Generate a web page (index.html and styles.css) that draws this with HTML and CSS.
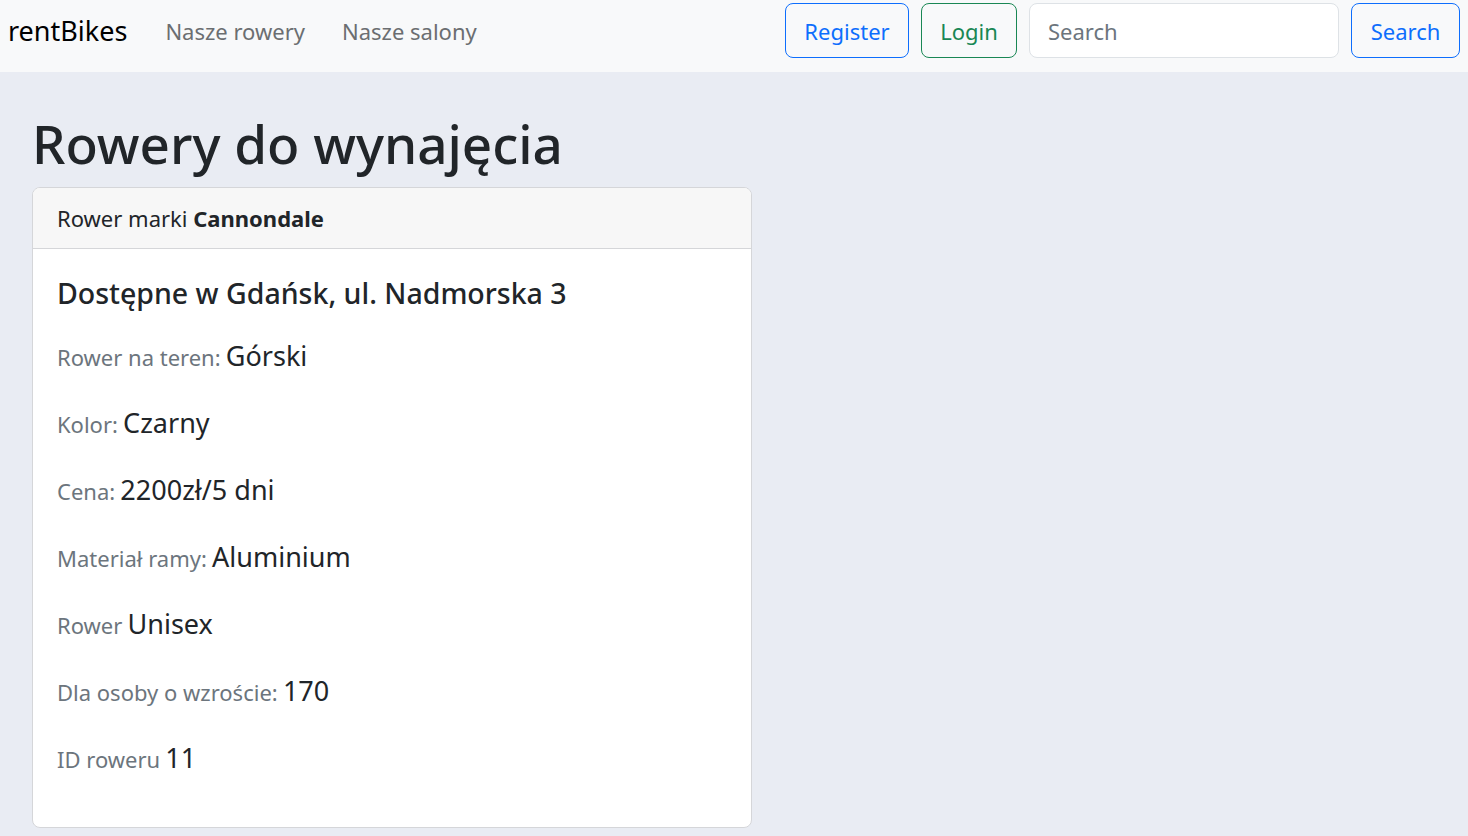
FILE: index.html
```html
<!DOCTYPE html>
<html lang="pl">
<head>
<meta charset="utf-8">
<title>rentBikes</title>
<link rel="stylesheet" href="styles.css">
</head>
<body>
<nav class="navbar">
  <div class="nav-left">
    <a class="brand" href="#">rentBikes</a>
    <a class="nav-link" href="#">Nasze rowery</a>
    <a class="nav-link" href="#">Nasze salony</a>
  </div>
  <div class="nav-right">
    <a class="btn btn-blue btn-register" href="#">Register</a>
    <a class="btn btn-green btn-login" href="#">Login</a>
    <form class="search-form">
      <input class="search-input" type="search" placeholder="Search">
      <button class="btn btn-blue btn-search" type="button">Search</button>
    </form>
  </div>
</nav>
<main class="container">
  <h1 class="page-title">Rowery do wynajęcia</h1>
  <div class="card">
    <div class="card-header">Rower marki <b>Cannondale</b></div>
    <div class="card-body">
      <h4 class="card-title">Dostępne w Gdańsk, ul. Nadmorska 3</h4>
      <p class="row"><span class="label">Rower na teren:</span> <span class="value">Górski</span></p>
      <p class="row"><span class="label">Kolor:</span> <span class="value">Czarny</span></p>
      <p class="row"><span class="label">Cena:</span> <span class="value">2200zł/5 dni</span></p>
      <p class="row"><span class="label">Materiał ramy:</span> <span class="value">Aluminium</span></p>
      <p class="row"><span class="label">Rower</span> <span class="value">Unisex</span></p>
      <p class="row"><span class="label">Dla osoby o wzroście:</span> <span class="value">170</span></p>
      <p class="row"><span class="label">ID roweru</span> <span class="value">11</span></p>
    </div>
  </div>
</main>
</body>
</html>
```

FILE: styles.css
```css
* { box-sizing: border-box; }
html, body { margin: 0; padding: 0; }
body {
  background: #e9ecf3;
  font-family: "Noto Sans", "Open Sans", sans-serif;
  color: #212529;
  font-size: 20px;
}
.navbar {
  height: 72px;
  background: #f8f9fa;
  display: flex;
  align-items: flex-start;
  justify-content: space-between;
  padding: 3px 8px 0 8px;
}
.nav-left { display: flex; align-items: center; height: 55px; }
.brand {
  font-size: 27px;
  color: #000;
  text-decoration: none;
  margin-right: 38px;
}
.nav-link {
  font-size: 22px;
  color: #6b6e71;
  text-decoration: none;
  margin-right: 37px;
}
.nav-right { display: flex; align-items: center; gap: 12px; }
.search-form { display: flex; align-items: center; gap: 12px; margin: 0; }
.btn {
  height: 55px;
  display: inline-flex;
  align-items: center;
  justify-content: center;
  border: 1px solid;
  border-radius: 8px;
  font-size: 22px;
  text-decoration: none;
  background: transparent;
  font-family: inherit;
  padding: 0;
}
.btn-blue { color: #0d6efd; border-color: #0d6efd; }
.btn-green { color: #198754; border-color: #198754; }
.btn-register { width: 124px; }
.btn-login { width: 96px; }
.btn-search { width: 109px; }
.search-input {
  width: 310px;
  height: 55px;
  border: 1px solid #dee2e6;
  border-radius: 8px;
  background: #fff;
  padding: 0 18px;
  font-family: inherit;
  font-size: 22px;
  color: #212529;
}
.search-input::placeholder { color: #6c757d; }
.container { padding: 0 32px; }
.page-title {
  font-size: 53px;
  font-weight: 500;
  margin: 0;
  padding-top: 32px;
  line-height: 80px;
  color: #212529;
  height: 115px;
}
.card {
  width: 720px;
  background: #fff;
  border: 1px solid #d5d6d9;
  border-radius: 8px;
  overflow: hidden;
}
.card-header {
  height: 61px;
  background: #f7f7f7;
  border-bottom: 1px solid #d5d6d9;
  padding: 0 24px;
  display: flex;
  align-items: center;
  font-size: 22px;
  white-space: pre;
}
.card-body { padding: 22px 24px 23px; }
.card-title {
  font-size: 28.5px;
  font-weight: 500;
  margin: 0 0 20px;
  line-height: 44px;
}
.row {
  margin: 0 0 20px;
  line-height: 47px;
  height: 47px;
}
.label { color: #6c757d; font-size: 22px; line-height: 1; }
.value { font-size: 27px; color: #212529; line-height: 1; }
```
